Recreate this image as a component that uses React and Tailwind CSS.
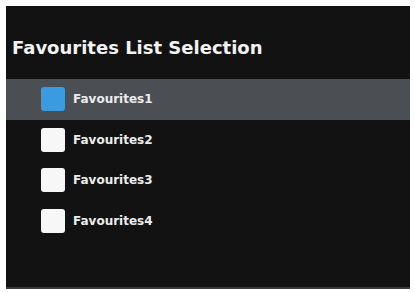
import React from 'react'

const items = ['Favourites1', 'Favourites2', 'Favourites3', 'Favourites4']

export default function App() {
  const selected = 0

  return (
    <div className="w-[415px] h-[292px] bg-white pt-[6px] pl-[6px] pr-[5px] pb-[3px]" style={{ fontFamily: '"DejaVu Sans", "Liberation Sans", sans-serif' }}>
      <div className="h-full bg-[#121212] border-b-2 border-[#3a3a3a]">
        <h1 className="pt-[31px] pl-[6px] text-[18px] leading-[22px] font-bold text-[#f2f2f2]">
          Favourites List Selection
        </h1>
        <ul className="mt-[20px]">
          {items.map((name, idx) => (
            <li
              key={name}
              className={`h-[40.5px] flex items-center pl-[35px] gap-[8px] ${idx === selected ? 'bg-[#4b4e52]' : ''}`}
            >
              <span className={`w-[24px] h-[24px] rounded-[3px] ${idx === selected ? 'bg-[#3b9be2]' : 'bg-[#f7f7f7]'}`} />
              <span className="text-[12px] font-bold text-[#ececec]">{name}</span>
            </li>
          ))}
        </ul>
      </div>
    </div>
  )
}
